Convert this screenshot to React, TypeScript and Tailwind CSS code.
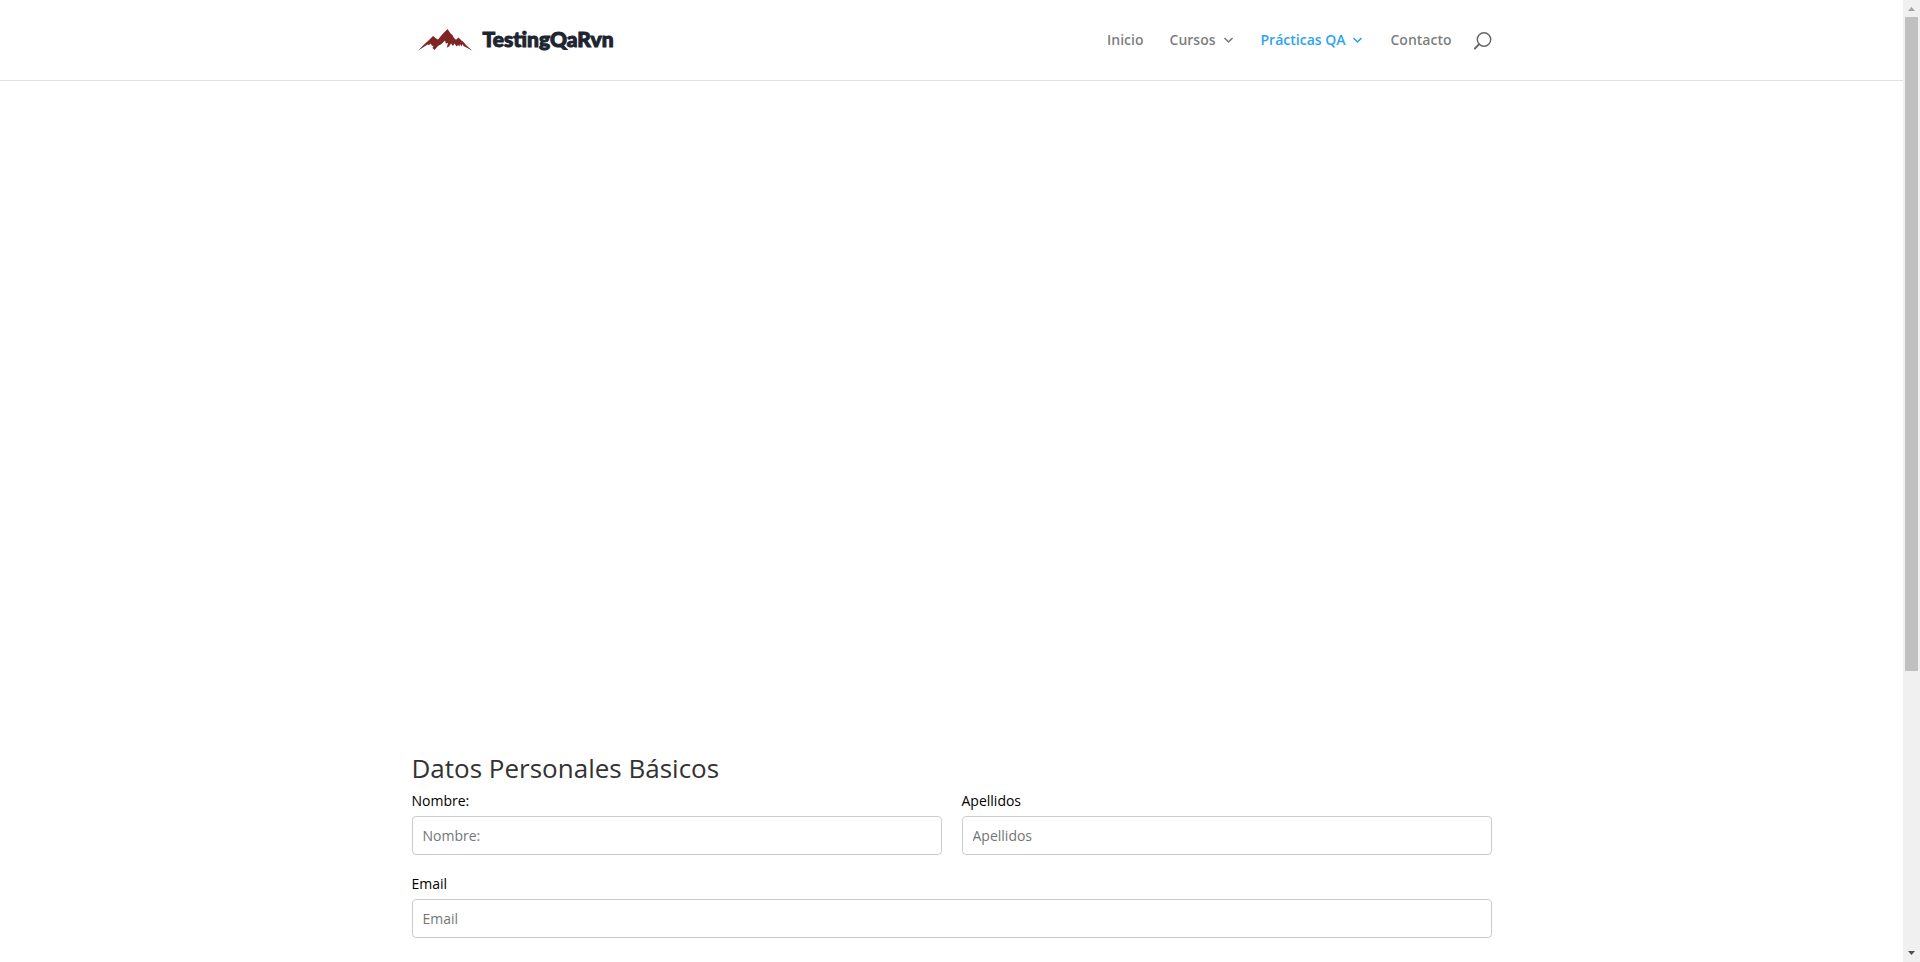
const fields = [
  { id: "nombre", label: "Nombre:", type: "text", wide: false },
  { id: "apellidos", label: "Apellidos", type: "text", wide: false },
  { id: "email", label: "Email", type: "email", wide: true },
];

const links = [
  { label: "Inicio", menu: false, active: false },
  { label: "Cursos", menu: true, active: false },
  { label: "Prácticas QA", menu: true, active: true },
  { label: "Contacto", menu: false, active: false },
];

function Chevron() {
  return (
    <svg className="mr-0.5" width="9" height="6" viewBox="0 0 9 6" fill="none" stroke="currentColor" strokeWidth="1.7" strokeLinecap="round" strokeLinejoin="round" aria-hidden="true">
      <path d="M1 1.5 4.5 5 8 1.5" />
    </svg>
  );
}

function Logo() {
  return (
    <a href="#" className="flex items-center gap-2.5 pl-1.5">
      <svg width="55" height="22" viewBox="0 0 55 22" fill="#7f2624" aria-hidden="true">
        <path d="M0 21.700 6 15.500 10.500 11.500 15 7 18.500 9.700 20 10.500 25 4.500 29.500 0 33 5 34.500 6 36 9 38 10.700 40.500 8.500 43.500 11.500 45 12.500 49 17 54.500 21.700 45.500 17 44.500 15 43.500 17.500 42 15 41.500 17.500 40 16 38.500 17.500 36.500 14.500 35 17 33 14.500 31 17.500 28.800 18.800 30 14 27.800 14.500 27 11.500 23.500 15 20 17 16.500 21 14.500 19 15.500 17 13.500 16.500 13 14.500 11 16 9.500 15.500Z" />
      </svg>
      <span className="pb-0.5 font-[Lato,sans-serif] text-[21px] leading-6 font-black text-[#1d2530] [-webkit-text-stroke:1px_#1d2530]">TestingQaRvn</span>
    </a>
  );
}

function Header() {
  return (
    <header className="border-b border-[#e2e2e2]">
      <div className="mx-auto flex h-20 max-w-[1080px] items-center justify-between">
        <Logo />
        <nav className="flex items-center gap-[26px] text-sm font-semibold text-[#666]/85">
          {links.map((l) => (
            <a key={l.label} href="#" className={l.active ? "flex items-center gap-2 text-[#2ea3f2]" : "flex items-center gap-2"}>
              {l.label}
              {l.menu && <Chevron />}
            </a>
          ))}
          <button type="button" aria-label="Buscar" className="-ml-1 pt-0.5">
            <svg width="18" height="18" viewBox="0 0 18 18" fill="none" stroke="#666" strokeWidth="1.5" strokeLinecap="round" aria-hidden="true">
              <circle cx="10" cy="7.5" r="6.7" />
              <path d="M5.200 12.200 0.900 16.500" strokeWidth="1.9" />
            </svg>
          </button>
        </nav>
      </div>
    </header>
  );
}

function ScrollBar() {
  return (
    <div aria-hidden="true" className="sticky top-0 flex h-screen w-[17px] shrink-0 flex-col items-center justify-between bg-[#f0f0f0]">
      <div className="flex h-full min-h-0 flex-col items-center">
        <svg width="17" height="17" className="shrink-0" fill="#a3a3a3">
          <path d="M5 11h7L8.500 7Z" />
        </svg>
        <div className="h-9/13 w-[13px] bg-[#c0c0c0]" />
      </div>
      <svg width="17" height="17" className="shrink-0" fill="#505050">
        <path d="M5 6h7l-3.500 4Z" />
      </svg>
    </div>
  );
}

export default function App() {
  return (
    <div className="flex min-h-screen bg-white font-['Open_Sans',sans-serif]">
      <div className="min-w-0 flex-1">
        <Header />
        <main className="mx-auto max-w-[1080px]">
          <div className="h-[667px]" />
          <form>
            <h1 className="pb-px text-[26px] leading-10 text-[#333]">Datos Personales Básicos</h1>
            <div className="grid grid-cols-2 gap-x-5 gap-y-[17px]">
              {fields.map((f) => (
                <div key={f.id} className={f.wide ? "col-span-2" : ""}>
                  <label htmlFor={f.id} className="block pb-[3px] text-sm leading-6 text-black">
                    {f.label}
                  </label>
                  <input
                    id={f.id}
                    type={f.type}
                    placeholder={f.label}
                    className="block h-[39px] w-full rounded border border-[#ccc] px-2.5 text-sm placeholder:text-[#757575]"
                  />
                </div>
              ))}
            </div>
          </form>
        </main>
      </div>
      <ScrollBar />
    </div>
  );
}
